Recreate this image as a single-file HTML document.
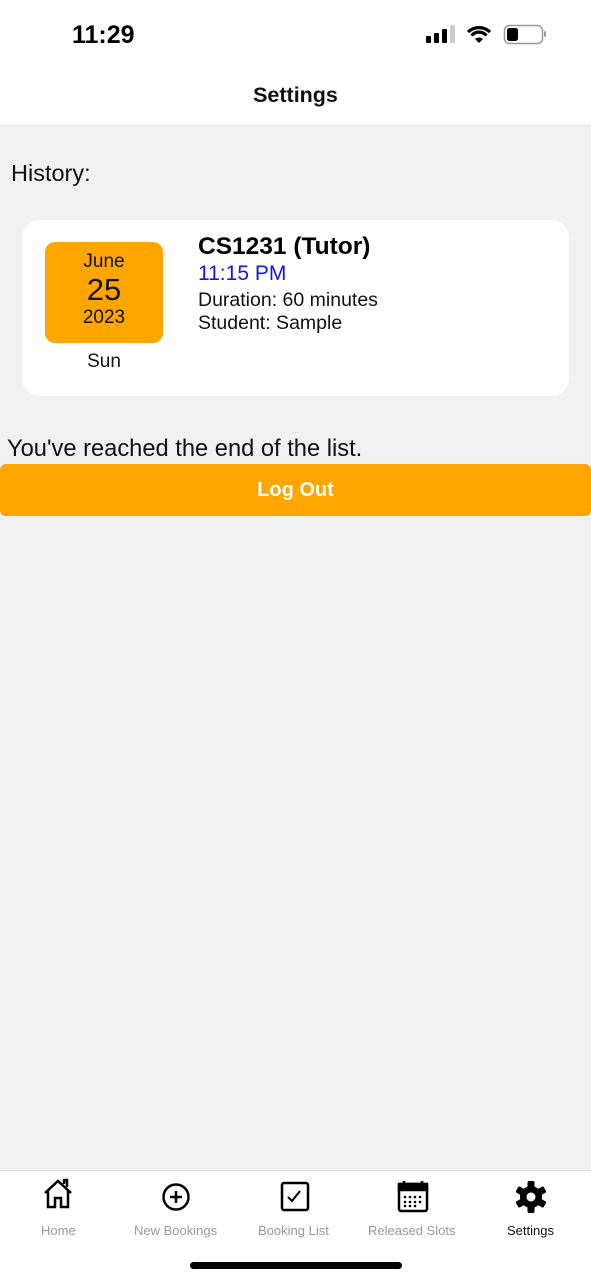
<!DOCTYPE html>
<html><head><meta charset="utf-8"><style>
*{margin:0;padding:0;box-sizing:border-box}
body{width:591px;height:1280px;background:#f1f1f1;font-family:"Liberation Sans",sans-serif;position:relative;overflow:hidden}
.abs{position:absolute}
</style></head><body>
<div class="abs" style="left:0;top:0;width:591px;height:126px;background:#fff;border-bottom:1px solid #e0e0e0"></div>
<div class="abs" style="left:72px;top:21px;font-size:25px;font-weight:bold;color:#000">11:29</div>
<svg class="abs" style="left:424px;top:24px" width="125" height="22">
<rect x="2" y="12" width="5" height="7" rx="1"/><rect x="10" y="9" width="5" height="10" rx="1"/><rect x="18" y="5" width="5" height="14" rx="1"/><rect x="26" y="1" width="5" height="18" rx="1" fill="#ccc"/>
<path d="M44 8 a16 16 0 0 1 22 0 M47.5 11.5 a10 10 0 0 1 15 0" stroke="#000" stroke-width="3.2" fill="none"/><path d="M51 15 l4 4 l4 -4 a6 6 0 0 0 -8 0z"/>
<rect x="80.5" y="1.5" width="38" height="18" rx="5" fill="none" stroke="#999" stroke-width="1.5"/><rect x="83" y="4" width="11" height="13" rx="2.5"/><rect x="120" y="7" width="2" height="6" rx="1" fill="#999"/>
</svg>
<div class="abs" style="left:0;top:83px;width:591px;text-align:center;font-size:21.5px;font-weight:bold;color:#111">Settings</div>
<div class="abs" style="left:11px;top:160px;font-size:23.5px;color:#111">History:</div>
<div class="abs" style="left:22px;top:220px;width:547px;height:176px;background:#fff;border-radius:18px"></div>
<div class="abs" style="left:45px;top:242px;width:118px;height:101px;background:#fea500;border-radius:10px;text-align:center;color:#111">
<div style="font-size:19px;margin-top:9px">June</div>
<div style="font-size:31px;line-height:34px">25</div>
<div style="font-size:19px">2023</div></div>
<div class="abs" style="left:45px;top:351px;width:118px;text-align:center;font-size:19px;color:#111">Sun</div>
<div class="abs" style="left:198px;top:233px;font-size:24.5px;font-weight:bold;color:#000">CS1231 (Tutor)</div>
<div class="abs" style="left:198px;top:262px;font-size:21px;color:#1515e6">11:15 PM</div>
<div class="abs" style="left:198px;top:289px;font-size:19.5px;color:#111">Duration: 60 minutes</div>
<div class="abs" style="left:198px;top:312px;font-size:19.5px;color:#111">Student: Sample</div>
<div class="abs" style="left:7px;top:436px;font-size:23.7px;color:#111">You've reached the end of the list.</div>
<div class="abs" style="left:0;top:464px;width:591px;height:52px;background:#fea500;border-radius:6px;text-align:center;line-height:52px;font-size:20px;font-weight:bold;color:#fff">Log Out</div>
<div class="abs" style="left:0;top:1170px;width:591px;height:110px;background:#fff;border-top:1px solid #ddd"></div>
<svg class="abs" style="left:0;top:1178px" width="591" height="40" fill="none" stroke="#000" stroke-width="2.5">
<path d="M45 15 L58 3 L71 15 M48 13 V29 H55 V20 H61 V29 H68 V13 M64 6 V2 H67 V9"/>
<circle cx="176" cy="19" r="12.5"/><path d="M176 13 V25 M170 19 H182"/>
<rect x="282" y="5" width="26" height="27" rx="2"/><path d="M288 19 l4 4 l8 -10" stroke-width="2"/>
<rect x="399" y="6" width="28" height="27" rx="2"/><rect x="399" y="6" width="28" height="6" fill="#000"/><path d="M404 3v4M422 3v4" />
<g fill="#000" stroke="none"><circle cx="405" cy="19" r="1.3"/><circle cx="410" cy="19" r="1.3"/><circle cx="415" cy="19" r="1.3"/><circle cx="420" cy="19" r="1.3"/><circle cx="405" cy="24" r="1.3"/><circle cx="410" cy="24" r="1.3"/><circle cx="415" cy="24" r="1.3"/><circle cx="420" cy="24" r="1.3"/><circle cx="405" cy="28" r="1.3"/><circle cx="410" cy="28" r="1.3"/><circle cx="415" cy="28" r="1.3"/></g>
<g transform="translate(531,19)" fill="#000" stroke="none"><circle r="11"/><g><rect x="-3.5" y="-16" width="7" height="32" rx="1.5"/><rect x="-3.5" y="-16" width="7" height="32" rx="1.5" transform="rotate(60)"/><rect x="-3.5" y="-16" width="7" height="32" rx="1.5" transform="rotate(120)"/></g><circle r="4.5" fill="#fff"/></g>
</svg>
<div class="abs" style="top:1223px;left:0;width:591px;font-size:13px;color:#999">
<span class="abs" style="left:41px">Home</span><span class="abs" style="left:134px">New Bookings</span><span class="abs" style="left:258px">Booking List</span><span class="abs" style="left:368px">Released Slots</span><span class="abs" style="left:507px;color:#111">Settings</span></div>
<div class="abs" style="left:190px;top:1262px;width:212px;height:7px;background:#000;border-radius:4px"></div>
</body></html>
